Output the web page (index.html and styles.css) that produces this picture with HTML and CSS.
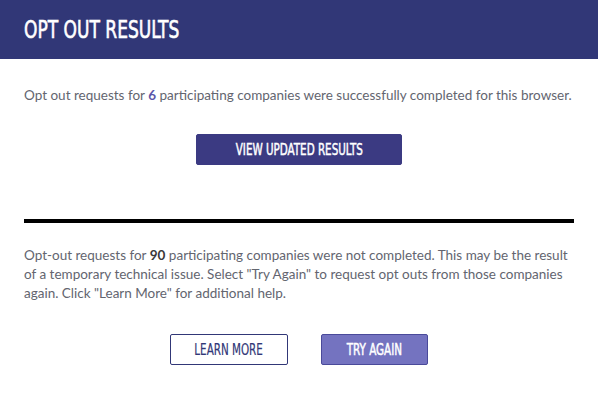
FILE: index.html
```html
<!DOCTYPE html>
<html lang="en">
<head>
<meta charset="utf-8">
<title>Opt Out Results</title>
<link rel="stylesheet" href="styles.css">
</head>
<body>
<header class="header">
  <h1 class="title"><span class="narrow">OPT OUT RESULTS</span></h1>
</header>
<main class="content">
  <section class="success">
    <p class="msg">Opt out requests for <strong class="num-ok">6</strong> participating companies were successfully completed for this browser.</p>
    <div class="actions">
      <button class="btn btn-dark"><span class="narrow">VIEW UPDATED RESULTS</span></button>
    </div>
  </section>
  <hr class="divider">
  <section class="failure">
    <p class="msg msg-fail"><span>Opt-out requests for</span> <strong class="num-fail">90</strong> <span>participating companies were not completed. This may be the result of a temporary technical issue. Select "Try Again" to request opt outs from those companies again. Click "Learn More" for additional help.</span></p>
    <div class="actions actions-row">
      <button class="btn btn-outline"><span class="narrow">LEARN MORE</span></button>
      <button class="btn btn-light"><span class="narrow">TRY AGAIN</span></button>
    </div>
  </section>
</main>
</body>
</html>
```
FILE: styles.css
```css
* { box-sizing: border-box; }
html, body { margin: 0; padding: 0; background: #fff; }
body { font-family: Lato, "Noto Sans", sans-serif; color: #63656f; }
.narrow { display: inline-block; white-space: nowrap; }
.header {
  background: #313777;
  height: 59px;
  display: flex;
  align-items: center;
  padding: 0 24px;
}
.title {
  margin: 0;
  color: #fff;
  font-family: "DejaVu Sans", sans-serif;
  font-stretch: condensed;
  font-weight: 400;
  font-size: 24px;
}
.title .narrow {
  transform: scaleX(0.79);
  transform-origin: left center;
  -webkit-text-stroke: 0.6px currentColor;
}
.content { padding: 0 24px; }
.success { padding-top: 27px; }
.msg { margin: 0; font-size: 13.5px; line-height: 19px; }
.num-ok { color: #5b55a8; font-weight: 700; }
.num-fail { color: #3a3a3a; font-weight: 700; }
.actions { display: flex; justify-content: center; }
.success .actions { margin-top: 29px; }
.btn {
  font-family: "DejaVu Sans", sans-serif;
  font-stretch: condensed;
  font-weight: 400;
  font-size: 16px;
  height: 31px;
  border-radius: 2px;
  padding: 0;
  cursor: pointer;
  display: flex;
  align-items: center;
  justify-content: center;
}
.btn .narrow { transform: scaleX(0.72); -webkit-text-stroke: 0.5px currentColor; }
.btn-dark { width: 206px; background: #3b3a82; color: #fff; border: 1px solid #3b3a82; }
.divider { margin: 54px 0 0; border: 0; height: 4px; background: #000; }
.failure { padding-top: 23px; }
.actions-row { gap: 33px; margin-top: 31px; }
.btn-outline { width: 118px; background: #fff; color: #313777; border: 1px solid #313777; }
.btn-outline .narrow { -webkit-text-stroke: 0.2px currentColor; }
.btn-light { width: 107px; background: #7473c0; color: #fff; border: 1px solid #4a4a9a; }
```
